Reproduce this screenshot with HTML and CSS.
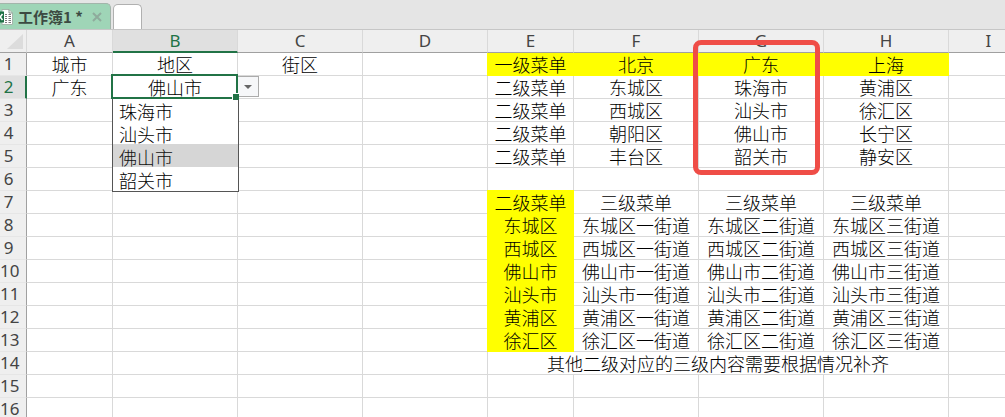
FILE: index.html
```
<!DOCTYPE html>
<html lang="zh-CN">
<head>
	<meta charset="UTF-8">
	<meta name="viewport" content="width=device-width, initial-scale=1">
	<title>工作簿1</title>
	<link rel="stylesheet" href="styles.css">
</head>
<body>

	<nav class="tabs">
		<div class="tab">
			<svg class="book-icon" width="13" height="16" viewBox="0 0 13 16" aria-hidden="true">
				<path d="M2 .5h7l3.500 3.500v11.500H2z" fill="#fff" stroke="#a5b5ab"/>
				<path d="M9 .5V4h3.500" fill="none" stroke="#8a9a90"/>
				<path d="M5 5.500h2M8.500 5.500h2.500M5 7.500h2M8.500 7.500h2.500M5 9.500h2M8.500 9.500h2.500M5 11.500h2M8.500 11.500h2.500M5 13.500h2M8.500 13.500h2.500" stroke="#777"/>
				<path d="M0 2.500h4v11H0z" fill="#1d7044"/>
				<path d="M-2 5l4.500 6M2.500 5l-4.500 6" stroke="#fff" stroke-width="1.500"/>
			</svg>
			<a class="title" href="#sheet">工作簿1 *</a>
			<button class="close" aria-label="关闭">
				<svg width="10" height="10" viewBox="0 0 10 10"><path d="M1 1l8 8M9 1l-8 8" stroke="#8fab9c" stroke-width="2"/></svg>
			</button>
		</div>
		<button class="new-tab" aria-label="新建"></button>
	</nav>

	<main class="sheet" id="sheet">
		<table>
			<colgroup>
				<col class="c-head"><col class="c-small"><col class="c-wide"><col class="c-wide"><col class="c-wide">
				<col class="c-small"><col class="c-wide"><col class="c-wide"><col class="c-wide"><col class="c-last">
			</colgroup>
			<thead>
				<tr>
					<th class="corner"><svg width="16" height="15" viewBox="0 0 16 15" aria-hidden="true"><path d="M16 0v15H0z" fill="#dcdcdc"/></svg></th>
					<th>A</th><th class="active">B</th><th>C</th><th>D</th><th>E</th><th>F</th>
					<th class="marked">G<span class="mark"></span></th>
					<th>H</th><th>I</th>
				</tr>
			</thead>
			<tbody>
				<tr><th>1</th><td>城市</td><td>地区</td><td>街区</td><td></td><td class="fill">一级菜单</td><td class="fill">北京</td><td class="fill">广东</td><td class="fill">上海</td><td></td></tr>
				<tr>
					<th class="active">2</th><td>广东</td>
					<td class="selected">
						<label for="area">佛山市</label>
						<span class="frame"></span>
						<button class="arrow" aria-label="展开"><svg width="8" height="4" viewBox="0 0 8 4"><path d="M0 0h8L4 4z" fill="#666"/></svg></button>
						<select class="list" id="area" size="4">
							<option>珠海市</option>
							<option>汕头市</option>
							<option selected>佛山市</option>
							<option>韶关市</option>
						</select>
					</td>
					<td></td><td></td><td>二级菜单</td><td>东城区</td><td>珠海市</td><td>黄浦区</td><td></td>
				</tr>
				<tr><th>3</th><td></td><td></td><td></td><td></td><td>二级菜单</td><td>西城区</td><td>汕头市</td><td>徐汇区</td><td></td></tr>
				<tr><th>4</th><td></td><td></td><td></td><td></td><td>二级菜单</td><td>朝阳区</td><td>佛山市</td><td>长宁区</td><td></td></tr>
				<tr><th>5</th><td></td><td></td><td></td><td></td><td>二级菜单</td><td>丰台区</td><td>韶关市</td><td>静安区</td><td></td></tr>
				<tr><th>6</th><td></td><td></td><td></td><td></td><td></td><td></td><td></td><td></td><td></td></tr>
				<tr><th>7</th><td></td><td></td><td></td><td></td><td class="fill first">二级菜单</td><td>三级菜单</td><td>三级菜单</td><td>三级菜单</td><td></td></tr>
				<tr><th>8</th><td></td><td></td><td></td><td></td><td class="fill">东城区</td><td>东城区一街道</td><td>东城区二街道</td><td>东城区三街道</td><td></td></tr>
				<tr><th>9</th><td></td><td></td><td></td><td></td><td class="fill">西城区</td><td>西城区一街道</td><td>西城区二街道</td><td>西城区三街道</td><td></td></tr>
				<tr><th>10</th><td></td><td></td><td></td><td></td><td class="fill">佛山市</td><td>佛山市一街道</td><td>佛山市二街道</td><td>佛山市三街道</td><td></td></tr>
				<tr><th>11</th><td></td><td></td><td></td><td></td><td class="fill">汕头市</td><td>汕头市一街道</td><td>汕头市二街道</td><td>汕头市三街道</td><td></td></tr>
				<tr><th>12</th><td></td><td></td><td></td><td></td><td class="fill">黄浦区</td><td>黄浦区一街道</td><td>黄浦区二街道</td><td>黄浦区三街道</td><td></td></tr>
				<tr><th>13</th><td></td><td></td><td></td><td></td><td class="fill">徐汇区</td><td>徐汇区一街道</td><td>徐汇区二街道</td><td>徐汇区三街道</td><td></td></tr>
				<tr><th>14</th><td></td><td></td><td></td><td></td><td colspan="4">其他二级对应的三级内容需要根据情况补齐</td><td></td></tr>
				<tr><th>15</th><td></td><td></td><td></td><td></td><td></td><td></td><td></td><td></td><td></td></tr>
				<tr><th>16</th><td></td><td></td><td></td><td></td><td></td><td></td><td></td><td></td><td></td></tr>
			</tbody>
		</table>
	</main>

</body>
</html>
```
FILE: styles.css
```
*{
	box-sizing: border-box;
}

body{
	margin: 0;
	height: 100vh;
	overflow: hidden;
	display: flex;
	flex-direction: column;
	background-color: #fff;
	color: #000;
	font-family: "Noto Sans CJK SC", sans-serif;
	font-size: 18px;
	font-weight: 300;
}

button{
	margin: 0;
	padding: 0;
	border: 0;
	background: none;
}

/* workbook tabs */

.tabs{
	flex: none;
	display: flex;
	align-items: flex-end;
	gap: 2px;
	height: 30px;
	background-color: #e5e5e5;
	border-bottom: 1px solid #c6c6c6;
}

.tab{
	display: flex;
	align-items: center;
	height: 26px;
	padding-right: 8px;
	background-color: #9fd5b7;
	border: 1px solid #a3b5ab;
	border-width: 1px 1px 0 0;
	border-radius: 0 5px 0 0;
}

.tab .title{
	margin: 0 9px 0 5px;
	color: #3c4a42;
	font-size: 15px;
	font-weight: 700;
	line-height: 24px;
	text-decoration: none;
	white-space: nowrap;
}

.tab .close{
	display: flex;
}

.new-tab{
	width: 29px;
	height: 25px;
	background-color: #fff;
	border: 1px solid #b0b0b0;
	border-bottom: 0;
	border-radius: 5px 5px 0 0;
}

/* grid */

.sheet{
	flex: 1;
	min-height: 0;
	overflow: hidden;
}

table{
	width: 100%;
	min-width: 1029px;
	table-layout: fixed;
	border-collapse: separate;
	border-spacing: 0;
}

.c-head{
	width: 27px;
}

.c-small{
	width: 86px;
}

.c-wide{
	width: 125px;
}

th, td{
	height: 23px;
	padding: 0;
	line-height: 22px;
	text-align: center;
	white-space: nowrap;
	border: 0 solid #d9d9d9;
	border-width: 0 1px 1px 0;
}

th{
	background-color: #efefef;
	color: #444;
	font-family: "Noto Sans", sans-serif;
	font-size: 17px;
	font-weight: 400;
}

thead th{
	border-bottom-color: #a0a0a0;
}

thead .active{
	background-color: #e0e0e0;
	color: #217346;
	border-bottom: 2px solid #217346;
	line-height: 21px;
}

thead .corner{
	border-right-color: #d9d9d9;
	line-height: 0;
	text-align: right;
	padding-right: 3px;
}

tbody th{
	padding-right: 9px;
	border-right-color: #a0a0a0;
	border-bottom-color: #e6e6e6;
}

tbody th.active{
	padding-right: 8px;
	background-color: #e0e0e0;
	color: #217346;
	border-right: 2px solid #217346;
}

.fill{
	background-color: #ff0;
	border-color: #ff0;
	box-shadow: -1px 0 0 #ff0;
}

.fill.first{
	box-shadow: -1px 0 0 #ff0, 0 -1px 0 #ff0, -1px -1px 0 #ff0;
}

/* red outline around G1:G5 */

.marked{
	position: relative;
}

.mark{
	position: absolute;
	z-index: 2;
	top: 10px;
	left: -6px;
	width: 127px;
	height: 135px;
	border: 5px solid #ef4d47;
	border-radius: 8px;
	pointer-events: none;
}

/* selected cell with its open list */

.selected{
	position: relative;
}

.frame{
	position: absolute;
	z-index: 2;
	top: -2px;
	right: -1px;
	bottom: -1px;
	left: -2px;
	border: 2px solid #217346;
	pointer-events: none;
}

.frame::after{
	content: "";
	position: absolute;
	right: -3px;
	bottom: -3px;
	width: 6px;
	height: 6px;
	background-color: #217346;
	border: 1px solid #fff;
	border-width: 1px 0 0 1px;
}

.arrow{
	position: absolute;
	top: 0;
	left: 100%;
	display: flex;
	align-items: center;
	justify-content: center;
	width: 22px;
	height: 21px;
	background-color: #f6f7f9;
	border: 1px solid #ababab;
}

.list{
	position: absolute;
	z-index: 1;
	top: 100%;
	left: -1px;
	width: 127px;
	height: 94px;
	margin: 0;
	padding: 0;
	overflow: hidden;
	background-color: #fff;
	border: 1px solid #555;
	border-top: 0;
	border-radius: 0;
	outline: none;
	color: #000;
	font: inherit;
}

.list option{
	height: 23px;
	min-height: 23px;
	padding: 0 6px;
	font-weight: 300;
	line-height: 22px;
}

.list option:checked{
	background: linear-gradient(#d6d6d6, #d6d6d6);
}
```
